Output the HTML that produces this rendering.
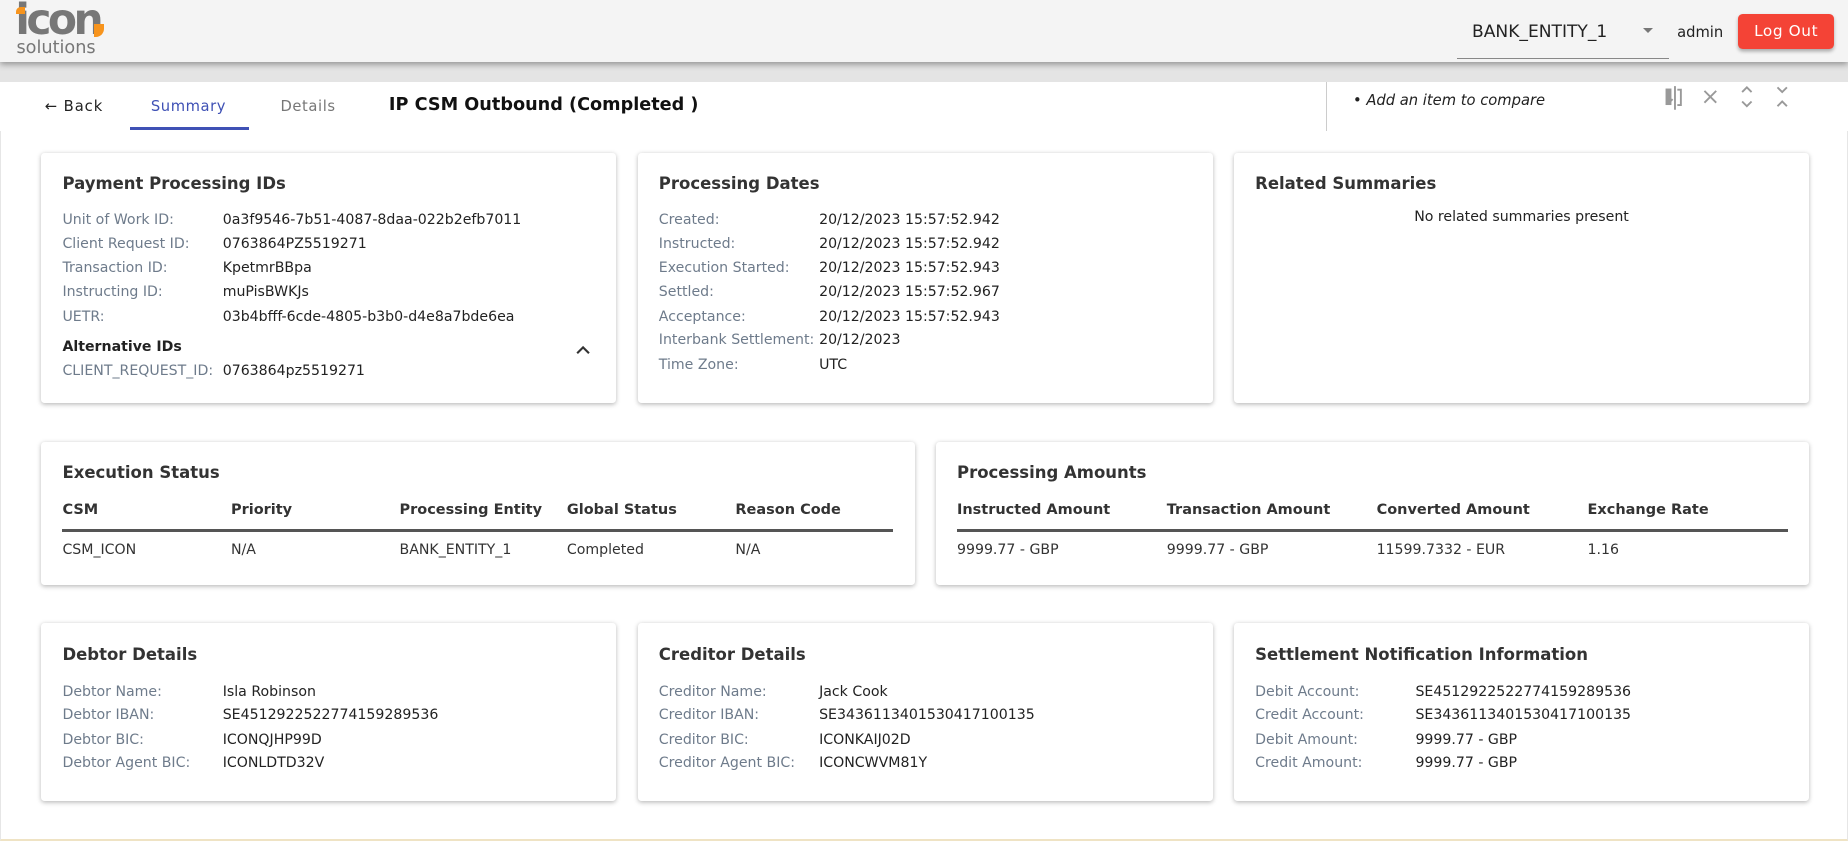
<!DOCTYPE html>
<html><head><meta charset="utf-8"><style>
html,body{margin:0;padding:0;background:#fff;overflow:hidden}
#w{zoom:1.17857;width:1568px;height:715px;position:relative;font-family:"DejaVu Sans","Liberation Sans",sans-serif;color:#333}
.hdr{position:absolute;left:0;top:0;width:1568px;height:53px;background:#f4f4f4;box-shadow:0 2px 5px rgba(0,0,0,.35);z-index:2}
.band{position:absolute;left:0;top:53px;width:1568px;height:17px;background:#e4e4e4}
.tabs{position:absolute;left:0;top:70px;width:1568px;height:41px;background:#fff;border-bottom:1px solid #ddd}
.main{position:absolute;left:0;top:111px;width:1566px;height:601px;border:1px solid #e6e6e6;border-top:none;border-bottom:2px solid #efe3c4;background:#fff}
.card{position:absolute;background:#fff;border-radius:3px;box-shadow:0 1px 4px rgba(0,0,0,.28)}
.card h3{margin:0;position:absolute;left:18px;top:18px;font-size:14px;font-weight:bold;color:#333}
.row{position:absolute;left:18px;font-size:12px;white-space:nowrap}
.row .k{position:absolute;left:0;color:#6e7b8b}
.row .v{position:absolute;color:#222}
.th{position:absolute;font-size:12.3px;font-weight:bold;color:#333;white-space:nowrap}
.td{position:absolute;font-size:12px;color:#333;white-space:nowrap}
</style></head><body><div id="w">
<div class="hdr">
  <div style="position:absolute;left:13px;top:0px;font-size:36px;font-weight:bold;color:#777;letter-spacing:-3px;line-height:36px">icon</div>
  <div style="position:absolute;left:80px;top:20px;width:8px;height:11px;background:#f7941d;border-radius:0 0 7px 0"></div>
  <div style="position:absolute;left:14px;top:6px;width:7px;height:6px;background:#f7941d;border-radius:4px 0 0 0"></div>
  <div style="position:absolute;left:14px;top:32px;font-size:15px;color:#777">solutions</div>
  <div style="position:absolute;left:1249px;top:19px;font-size:14.5px;color:#222">BANK_ENTITY_1</div>
  <div style="position:absolute;left:1394px;top:24px;width:0;height:0;border-left:5px solid transparent;border-right:5px solid transparent;border-top:5px solid #777"></div>
  <div style="position:absolute;left:1236px;top:49px;width:180px;height:1px;background:#888"></div>
  <div style="position:absolute;left:1423px;top:20px;font-size:12.5px;color:#222">admin</div>
  <div style="position:absolute;left:1475px;top:12px;width:81px;height:30px;background:#f44336;border-radius:4px;box-shadow:0 2px 3px rgba(0,0,0,.3);color:#fff;font-size:13px;text-align:center;line-height:30px;letter-spacing:.5px">Log Out</div>
</div>
<div class="band"></div>
<div class="tabs">
  <div style="position:absolute;left:38px;top:13px;font-size:12.5px;color:#222;letter-spacing:.8px">&#8592; Back</div>
  <div style="position:absolute;left:128px;top:13px;font-size:12.5px;color:#3f51b5;letter-spacing:.5px">Summary</div>
  <div style="position:absolute;left:110px;top:38px;width:101px;height:2px;background:#3f51b5"></div>
  <div style="position:absolute;left:238px;top:13px;font-size:12.5px;color:#777;letter-spacing:.5px">Details</div>
  <div style="position:absolute;left:330px;top:11px;font-size:15px;font-weight:bold;color:#111">IP CSM Outbound (Completed )</div>
  <div style="position:absolute;left:1125px;top:0;width:1px;height:41px;background:#ccc"></div>
  <div style="position:absolute;left:1148px;top:8px;font-size:12.5px;font-style:italic;color:#222">• Add an item to compare</div>
  <svg style="position:absolute;left:1410px;top:2px" width="110" height="22" viewBox="0 0 110 22" fill="none" stroke="#999" stroke-width="1.6">
    <rect x="3" y="3" width="5" height="14" fill="#999" stroke="none"/><path d="M11 1v20M13 4h3v13h-3M9 12l-3 3"/>
    <path d="M36 5l10 10M46 5l-10 10"/>
    <path d="M68 6l4-4 4 4M68 14l4 4 4-4"/>
    <path d="M98 2l4 4 4-4M98 18l4-4 4 4"/>
  </svg>
</div>
<div class="main"></div>

<div class="card" style="left:35px;top:130px;width:488px;height:212px">
  <h3>Payment Processing IDs</h3>
  <div class="row" style="top:50px"><span class="k">Unit of Work ID:</span><span class="v" style="left:136px">0a3f9546-7b51-4087-8daa-022b2efb7011</span></div>
  <div class="row" style="top:70px"><span class="k">Client Request ID:</span><span class="v" style="left:136px">0763864PZ5519271</span></div>
  <div class="row" style="top:91px"><span class="k">Transaction ID:</span><span class="v" style="left:136px">KpetmrBBpa</span></div>
  <div class="row" style="top:111px"><span class="k">Instructing ID:</span><span class="v" style="left:136px">muPisBWKJs</span></div>
  <div class="row" style="top:132px"><span class="k">UETR:</span><span class="v" style="left:136px">03b4bfff-6cde-4805-b3b0-d4e8a7bde6ea</span></div>
  <div style="position:absolute;left:18px;top:158px;font-size:12px;font-weight:bold;color:#222">Alternative IDs</div>
  <svg style="position:absolute;left:454px;top:163px" width="12" height="8"><path d="M1 7l5-5 5 5" stroke="#333" stroke-width="1.8" fill="none"/></svg>
  <div class="row" style="top:178px"><span class="k">CLIENT_REQUEST_ID:</span><span class="v" style="left:136px">0763864pz5519271</span></div>
</div>

<div class="card" style="left:541px;top:130px;width:488px;height:212px">
  <h3>Processing Dates</h3>
  <div class="row" style="top:50px"><span class="k">Created:</span><span class="v" style="left:136px">20/12/2023 15:57:52.942</span></div>
  <div class="row" style="top:70px"><span class="k">Instructed:</span><span class="v" style="left:136px">20/12/2023 15:57:52.942</span></div>
  <div class="row" style="top:91px"><span class="k">Execution Started:</span><span class="v" style="left:136px">20/12/2023 15:57:52.943</span></div>
  <div class="row" style="top:111px"><span class="k">Settled:</span><span class="v" style="left:136px">20/12/2023 15:57:52.967</span></div>
  <div class="row" style="top:132px"><span class="k">Acceptance:</span><span class="v" style="left:136px">20/12/2023 15:57:52.943</span></div>
  <div class="row" style="top:152px"><span class="k">Interbank Settlement:</span><span class="v" style="left:136px">20/12/2023</span></div>
  <div class="row" style="top:173px"><span class="k">Time Zone:</span><span class="v" style="left:136px">UTC</span></div>
</div>

<div class="card" style="left:1047px;top:130px;width:488px;height:212px">
  <h3>Related Summaries</h3>
  <div style="position:absolute;left:0;width:488px;top:47px;text-align:center;font-size:12px;color:#222">No related summaries present</div>
</div>

<div class="card" style="left:35px;top:375px;width:741px;height:121px">
  <h3>Execution Status</h3>
  <div class="th" style="left:18px;top:51px">CSM</div>
  <div class="th" style="left:161px;top:51px">Priority</div>
  <div class="th" style="left:304px;top:51px">Processing Entity</div>
  <div class="th" style="left:446px;top:51px">Global Status</div>
  <div class="th" style="left:589px;top:51px">Reason Code</div>
  <div style="position:absolute;left:18px;top:74px;width:705px;height:2px;background:#555"></div>
  <div class="td" style="left:18px;top:85px">CSM_ICON</div>
  <div class="td" style="left:161px;top:85px">N/A</div>
  <div class="td" style="left:304px;top:85px">BANK_ENTITY_1</div>
  <div class="td" style="left:446px;top:85px">Completed</div>
  <div class="td" style="left:589px;top:85px">N/A</div>
</div>

<div class="card" style="left:794px;top:375px;width:741px;height:121px">
  <h3>Processing Amounts</h3>
  <div class="th" style="left:18px;top:51px">Instructed Amount</div>
  <div class="th" style="left:196px;top:51px">Transaction Amount</div>
  <div class="th" style="left:374px;top:51px">Converted Amount</div>
  <div class="th" style="left:553px;top:51px">Exchange Rate</div>
  <div style="position:absolute;left:18px;top:74px;width:705px;height:2px;background:#555"></div>
  <div class="td" style="left:18px;top:85px">9999.77 - GBP</div>
  <div class="td" style="left:196px;top:85px">9999.77 - GBP</div>
  <div class="td" style="left:374px;top:85px">11599.7332 - EUR</div>
  <div class="td" style="left:553px;top:85px">1.16</div>
</div>

<div class="card" style="left:35px;top:529px;width:488px;height:151px">
  <h3>Debtor Details</h3>
  <div class="row" style="top:51px"><span class="k">Debtor Name:</span><span class="v" style="left:136px">Isla Robinson</span></div>
  <div class="row" style="top:71px"><span class="k">Debtor IBAN:</span><span class="v" style="left:136px">SE4512922522774159289536</span></div>
  <div class="row" style="top:92px"><span class="k">Debtor BIC:</span><span class="v" style="left:136px">ICONQJHP99D</span></div>
  <div class="row" style="top:112px"><span class="k">Debtor Agent BIC:</span><span class="v" style="left:136px">ICONLDTD32V</span></div>
</div>

<div class="card" style="left:541px;top:529px;width:488px;height:151px">
  <h3>Creditor Details</h3>
  <div class="row" style="top:51px"><span class="k">Creditor Name:</span><span class="v" style="left:136px">Jack Cook</span></div>
  <div class="row" style="top:71px"><span class="k">Creditor IBAN:</span><span class="v" style="left:136px">SE3436113401530417100135</span></div>
  <div class="row" style="top:92px"><span class="k">Creditor BIC:</span><span class="v" style="left:136px">ICONKAIJ02D</span></div>
  <div class="row" style="top:112px"><span class="k">Creditor Agent BIC:</span><span class="v" style="left:136px">ICONCWVM81Y</span></div>
</div>

<div class="card" style="left:1047px;top:529px;width:488px;height:151px">
  <h3>Settlement Notification Information</h3>
  <div class="row" style="top:51px"><span class="k">Debit Account:</span><span class="v" style="left:136px">SE4512922522774159289536</span></div>
  <div class="row" style="top:71px"><span class="k">Credit Account:</span><span class="v" style="left:136px">SE3436113401530417100135</span></div>
  <div class="row" style="top:92px"><span class="k">Debit Amount:</span><span class="v" style="left:136px">9999.77 - GBP</span></div>
  <div class="row" style="top:112px"><span class="k">Credit Amount:</span><span class="v" style="left:136px">9999.77 - GBP</span></div>
</div>
</div></body></html>
